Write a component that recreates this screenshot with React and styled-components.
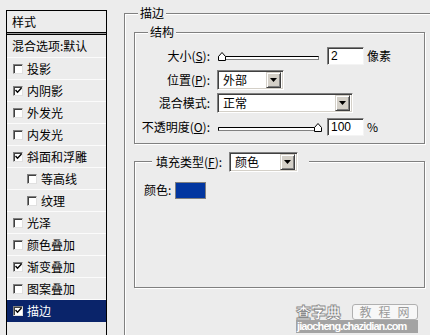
import React from 'react';
import styled, { createGlobalStyle } from 'styled-components';

const Global = createGlobalStyle`
  html, body { margin: 0; padding: 0; }
  body {
    background: #ececec;
    font-family: "Noto Sans CJK SC", "Noto Sans", sans-serif;
    font-size: 12px;
    line-height: 14px;
    color: #000;
  }
`;

const Page = styled.div`
  position: relative;
  width: 430px;
  height: 335px;
  overflow: hidden;
  box-sizing: border-box;
  padding: 6px 0 0 6px;
  display: flex;
  align-items: flex-start;
`;

/* ---------- left styles list ---------- */
const StylePanel = styled.div`
  flex-shrink: 0;
  margin-top: 4px;
  width: 101px;
  height: 340px;
  box-sizing: border-box;
  border: 1px solid #000;
  display: flex;
  flex-direction: column;
`;

const PanelHeader = styled.div`
  height: 21px;
  display: flex;
  align-items: center;
  padding-left: 5px;
`;

const HeaderRule = styled.div`
  height: 1px;
  background: #9a9a9a;
  border-top: 1px solid #000;
  border-bottom: 1px solid #000;
`;

const BlendRow = styled.div`
  height: 22px;
  display: flex;
  align-items: center;
  padding-left: 5px;
  border-bottom: 1px solid #fbfbfb;
`;

const Item = styled.div`
  height: 21px;
  display: flex;
  align-items: center;
  gap: 4px;
  padding-left: ${p => (p.$sub ? 20 : 6)}px;
  border-bottom: 1px solid ${p => (p.$selected ? '#0a246a' : '#fbfbfb')};
  background: ${p => (p.$selected ? '#0a246a' : 'transparent')};
  color: ${p => (p.$selected ? '#fff' : '#000')};
`;

const Box = styled.span`
  width: 10px;
  height: 10px;
  box-sizing: border-box;
  flex-shrink: 0;
  background: #fff;
  border: 1px solid;
  border-color: #808080 #e0e0e0 #e0e0e0 #808080;
  box-shadow: inset 1px 1px 0 #404040;
  display: flex;
  align-items: center;
  justify-content: center;
`;

const CheckBox = ({ checked }) => (
  <Box>
    {checked && (
      <svg width="7" height="7" viewBox="0 0 7 7">
        <path d="M0.5 3 L2.5 5.2 L6.5 1" fill="none" stroke="#000" strokeWidth="1.4" />
      </svg>
    )}
  </Box>
);

/* ---------- right side groups ---------- */
const Group = styled.fieldset`
  margin: 0;
  min-width: 0;
  box-sizing: border-box;
  border: 1px solid #808080;
  box-shadow: inset 1px 1px 0 #fff, 1px 1px 0 #fff;
  padding: ${p => p.$pad};
  width: ${p => p.$w};
  height: ${p => p.$h || 'auto'};
  margin-top: ${p => p.$mt || 0}px;
  margin-left: ${p => p.$ml || 0}px;
  flex-shrink: 0;
`;

const Legend = styled.legend`
  background: #ececec;
  padding: 0 ${p => p.$px || 2}px;
  margin-left: ${p => p.$ml}px;
  line-height: 14px;
  display: flex;
  align-items: center;
  gap: 7px;
`;

const FieldGrid = styled.div`
  display: grid;
  grid-template-columns: 66px 1fr;
  grid-auto-rows: 20px;
  column-gap: 7px;
  row-gap: 3.5px;
  align-items: center;
`;

const Label = styled.span`
  justify-self: end;
  white-space: nowrap;
`;

const Controls = styled.div`
  display: flex;
  align-items: center;
  gap: ${p => p.$gap || 4}px;
`;

const TextInput = styled.div`
  width: 37px;
  height: 18px;
  box-sizing: border-box;
  background: #fff;
  border: 1px solid;
  border-color: #808080 #f4f4f4 #f4f4f4 #808080;
  box-shadow: inset 1px 1px 0 #404040;
  padding-left: 3px;
  display: flex;
  align-items: center;
  font-family: "Liberation Sans", "Noto Sans", sans-serif;
  font-size: 12px;
`;

const Unit = styled.span`
  margin-left: -1px;
`;

const Select = styled.div`
  width: ${p => p.$w}px;
  height: 20px;
  box-sizing: border-box;
  background: #fff;
  border: 1px solid;
  border-color: #808080 #fff #fff #808080;
  box-shadow: inset 1px 1px 0 #404040, inset -1px -1px 0 #d4d0c8;
  display: flex;
  align-items: center;
  justify-content: space-between;
  padding: 2px 2px 2px 5px;
`;

const DropButton = styled.span`
  width: 15px;
  height: 16px;
  box-sizing: border-box;
  background: #d4d0c8;
  border: 1px solid;
  border-color: #d4d0c8 #404040 #404040 #d4d0c8;
  box-shadow: inset 1px 1px 0 #fff, inset -1px -1px 0 #808080;
  display: flex;
  align-items: center;
  justify-content: center;
`;

const Dropdown = ({ w, value }) => (
  <Select $w={w}>
    <span>{value}</span>
    <DropButton>
      <svg width="7" height="4" viewBox="0 0 7 4">
        <path d="M0 0 H7 L3.5 4 Z" fill="#000" />
      </svg>
    </DropButton>
  </Select>
);

const Slider = ({ at }) => {
  const tx = at === 'start' ? 1 : 97;
  return (
    <svg width="106" height="10" viewBox="0 0 106 10">
      <rect x="1.5" y="5.5" width="100" height="3" fill="#fff" stroke="#808080" />
      <path d="M1.5 5.5 H101.5 M1.5 5.5 V8.5" stroke="#000" fill="none" />
      <path
        d={`M${tx + 0.5} 9.5 V5.5 L${tx + 4} 1.5 L${tx + 7.5} 5.5 V9.5 Z`}
        fill="#fff"
        stroke="#000"
      />
    </svg>
  );
};

const FillContent = styled.div`
  display: flex;
  align-items: center;
  gap: 4px;
  height: 17px;
`;

const Swatch = styled.span`
  width: 31px;
  height: 17px;
  box-sizing: border-box;
  border: 1px solid #7f7f7f;
  background: #0236a0;
`;

/* ---------- watermark ---------- */
const Watermark = styled.div`
  position: absolute;
  right: 12px;
  bottom: 2px;
  width: 122px;
  display: flex;
  flex-direction: column;
`;

const WmTop = styled.div`
  display: flex;
  align-items: center;
  height: 17px;
`;

const WmBrand = styled.span`
  font-size: 15px;
  line-height: 17px;
  font-weight: 900;
  color: #fff;
  -webkit-text-stroke: 0.8px #8a8a8a;
  width: 56px;
  flex-shrink: 0;
  white-space: nowrap;
`;

const WmTag = styled.span`
  flex: 1;
  height: 16px;
  box-sizing: border-box;
  border: 1px solid #b0b0b0;
  border-radius: 3px;
  background: #f7f7f7;
  color: #9a9a9a;
  font-size: 12px;
  line-height: 14px;
  letter-spacing: 7px;
  text-align: center;
  padding-left: 6px;
`;

const WmUrl = styled.div`
  height: 13px;
  background: #a3a3a3;
  color: #fff;
  font-family: "Liberation Sans", Arial, sans-serif;
  font-size: 11px;
  font-weight: bold;
  line-height: 13px;
  letter-spacing: -0.9px;
  white-space: nowrap;
  padding-left: 1px;
`;

const items = [
  { t: '投影' },
  { t: '内阴影', c: true },
  { t: '外发光' },
  { t: '内发光' },
  { t: '斜面和浮雕', c: true },
  { t: '等高线', sub: true },
  { t: '纹理', sub: true },
  { t: '光泽' },
  { t: '颜色叠加' },
  { t: '渐变叠加', c: true },
  { t: '图案叠加' },
  { t: '描边', c: true, sel: true },
];

export default function App() {
  return (
    <>
      <Global />
      <Page>
        <StylePanel>
          <PanelHeader>样式</PanelHeader>
          <HeaderRule />
          <BlendRow>混合选项:默认</BlendRow>
          {items.map(it => (
            <Item key={it.t} $sub={it.sub} $selected={it.sel}>
              <CheckBox checked={it.c} />
              <span>{it.t}</span>
            </Item>
          ))}
        </StylePanel>

        <Group $w="330px" $h="420px" $ml={17} $pad="5px 0 0 9px">
          <Legend $ml={4}>描边</Legend>

          <Group $w="291px" $pad="7px 0 6px 9px">
            <Legend $ml={4}>结构</Legend>
            <FieldGrid>
              <Label>大小(<u>S</u>):</Label>
              <Controls>
                <Slider at="start" />
                <TextInput>2</TextInput>
                <Unit>像素</Unit>
              </Controls>

              <Label>位置(<u>P</u>):</Label>
              <Controls>
                <Dropdown w={67} value="外部" />
              </Controls>

              <Label>混合模式:</Label>
              <Controls>
                <Dropdown w={136} value="正常" />
              </Controls>

              <Label>不透明度(<u>O</u>):</Label>
              <Controls>
                <Slider at="end" />
                <TextInput>100</TextInput>
                <Unit>%</Unit>
              </Controls>
            </FieldGrid>
          </Group>

          <Group $w="291px" $mt={8} $pad="10px 0 88px 9px">
            <Legend $ml={8} $px={4}>
              <span>填充类型(<u>F</u>):</span>
              <Dropdown w={69} value="颜色" />
              <span style={{ width: 0 }} />
            </Legend>
            <FillContent>
              <span>颜色:</span>
              <Swatch />
            </FillContent>
          </Group>
        </Group>

        <Watermark>
          <WmTop>
            <WmBrand>查字典</WmBrand>
            <WmTag>教程网</WmTag>
          </WmTop>
          <WmUrl>jiaocheng.chazidian.com</WmUrl>
        </Watermark>
      </Page>
    </>
  );
}
